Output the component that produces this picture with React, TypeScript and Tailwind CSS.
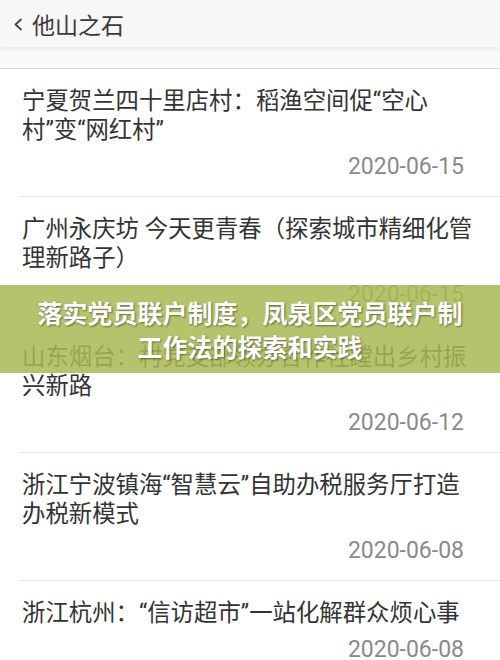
import React from "react";

type Item = { lines: string[]; date: string };

const items: Item[] = [
  { lines: ["宁夏贺兰四十里店村：稻渔空间促“空心", "村”变“网红村”"], date: "2020-06-15" },
  { lines: ["广州永庆坊 今天更青春（探索城市精细化管", "理新路子）"], date: "2020-06-15" },
  { lines: ["山东烟台：村党支部领办合作社蹚出乡村振", "兴新路"], date: "2020-06-12" },
  { lines: ["浙江宁波镇海“智慧云”自助办税服务厅打造", "办税新模式"], date: "2020-06-08" },
  { lines: ["浙江杭州：“信访超市”一站化解群众烦心事"], date: "2020-06-08" },
];

export default function App() {
  return (
    <div className="relative w-[500px] h-[660px] overflow-hidden bg-white font-['Roboto','Noto_Sans_CJK_SC',sans-serif]">
      <header className="relative z-10 h-[47px] bg-[#f7f7f7] flex items-center shadow-[0_2px_4px_rgba(0,0,0,0.08)]">
        <svg width="12" height="16" viewBox="0 0 12 16" className="ml-[12px]">
          <polyline points="9,3.5 3.5,8.5 9,13.5" fill="none" stroke="#444" strokeWidth="1.8" strokeLinecap="round" strokeLinejoin="round" />
        </svg>
        <span className="ml-[8px] text-[23px] leading-[30px] text-[#3a3a3a] font-['Noto_Sans_CJK_SC',sans-serif]">他山之石</span>
      </header>
      <div className="h-[22px] bg-[#fafafa] border-b border-[#dedede]" />
      <div className="flex flex-col">
        {items.map((it, i) => (
          <div key={i} className="ml-[20px] border-b border-[#e6e6e6] pt-[18px] pb-[15px] pr-[36px]">
            <div className="pl-[2px] text-[23.4px] leading-[29px] text-[#333] whitespace-nowrap">
              {it.lines.map((l, j) => (
                <div key={j}>{l}</div>
              ))}
            </div>
            <div className="mt-[7px] text-right text-[23px] leading-[29px] text-[#8a8a8a]">{it.date}</div>
          </div>
        ))}
      </div>
      <div className="absolute left-0 top-[285px] w-[500px] h-[88px] bg-[#a8ba52]/85 flex flex-col items-center justify-center">
        <div className="text-white font-bold text-[25px] leading-[34px] text-center font-['Noto_Sans_CJK_SC',sans-serif] [text-shadow:1px_1px_2px_rgba(0,0,0,0.45)]">
          <div>落实党员联户制度，凤泉区党员联户制</div>
          <div>工作法的探索和实践</div>
        </div>
      </div>
    </div>
  );
}
